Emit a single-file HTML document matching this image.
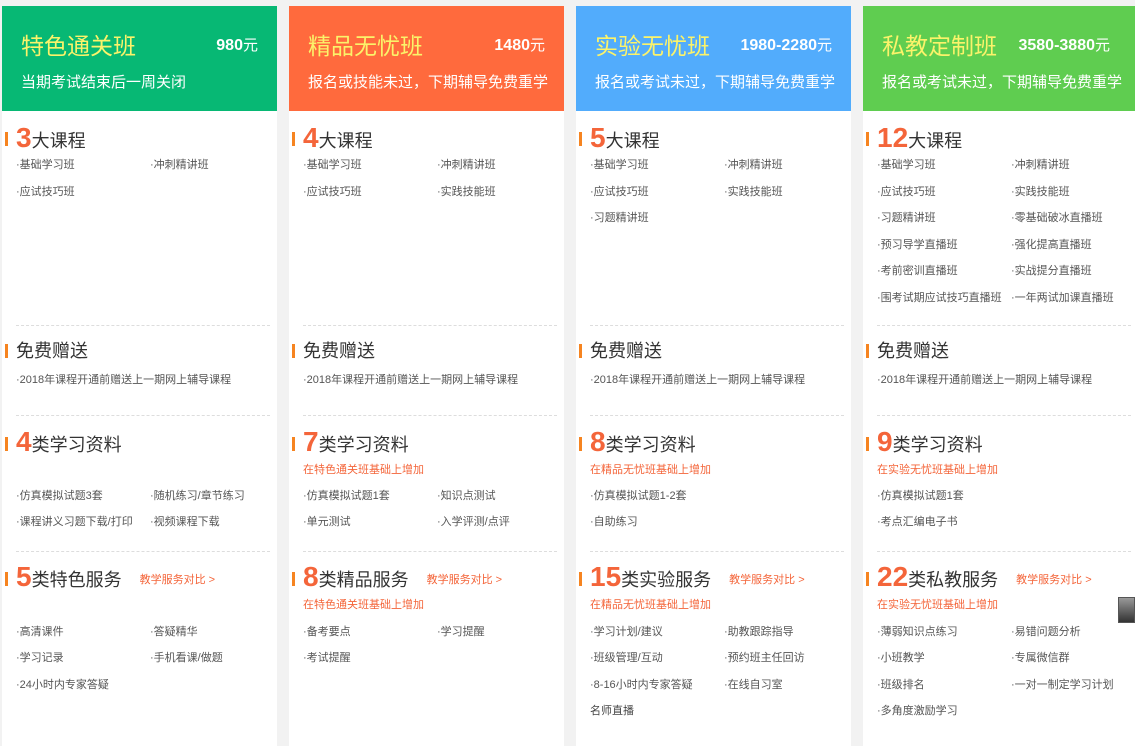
<!DOCTYPE html>
<html><head><meta charset="utf-8"><style>
*{margin:0;padding:0;box-sizing:border-box}
body{width:1135px;height:733px;background:#f2f2f2;font-family:"Liberation Sans","Noto Sans CJK SC",sans-serif;position:relative;overflow:hidden}
.col{position:absolute;top:6px;width:275px;height:740px;background:#fff}
.hd{position:absolute;left:0;top:0;width:100%;height:105px}
.t{position:absolute;left:19px;top:26px;font-size:23px;color:#fbf36a;line-height:28px}
.p{position:absolute;right:19px;top:30px;font-size:16px;font-weight:bold;color:#fff;line-height:20px}
.p span{font-weight:normal;font-size:15px}
.s{position:absolute;left:19px;top:67px;font-size:15px;color:#fff;line-height:20px;white-space:nowrap}
.a{position:absolute;white-space:nowrap;line-height:20px}
.h{font-size:18px;color:#333;left:14px;line-height:28px}
.h b{font-size:28px;color:#f4653a;font-weight:bold}
.bar{position:absolute;left:3px;width:3px;height:14px;background:#f68420}
.i{font-size:11px;color:#555}
.r{font-size:11px;color:#f4653a;left:14px}
.cmp{font-size:11px;color:#f4653a;margin-left:18px;vertical-align:3px}
.d{position:absolute;left:14px;width:254px;border-top:1px dashed #ddd}
</style></head><body>

<!-- col1 -->
<div class="col" style="left:2px">
<div class="hd" style="background:#07b874"><div class="t">特色通关班</div><div class="p">980<span>元</span></div><div class="s">当期考试结束后一周关闭</div></div>
<div class="bar" style="top:126px"></div><div class="a h" style="top:118px"><b>3</b>大课程</div>
<div class="a i" style="left:14px;top:149px">·基础学习班</div><div class="a i" style="left:148px;top:149px">·冲刺精讲班</div>
<div class="a i" style="left:14px;top:176px">·应试技巧班</div>
<div class="d" style="top:319px"></div>
<div class="bar" style="top:338px"></div><div class="a h" style="top:331px">免费赠送</div>
<div class="a i" style="left:14px;top:364px">·2018年课程开通前赠送上一期网上辅导课程</div>
<div class="d" style="top:409px"></div>
<div class="bar" style="top:431px"></div><div class="a h" style="top:422px"><b>4</b>类学习资料</div>
<div class="a i" style="left:14px;top:480px">·仿真模拟试题3套</div><div class="a i" style="left:148px;top:480px">·随机练习/章节练习</div>
<div class="a i" style="left:14px;top:506px">·课程讲义习题下载/打印</div><div class="a i" style="left:148px;top:506px">·视频课程下载</div>
<div class="d" style="top:545px"></div>
<div class="bar" style="top:566px"></div><div class="a h" style="top:557px"><b>5</b>类特色服务<span class="cmp">教学服务对比 &gt;</span></div>
<div class="a i" style="left:14px;top:616px">·高清课件</div><div class="a i" style="left:148px;top:616px">·答疑精华</div>
<div class="a i" style="left:14px;top:642px">·学习记录</div><div class="a i" style="left:148px;top:642px">·手机看课/做题</div>
<div class="a i" style="left:14px;top:669px">·24小时内专家答疑</div>
</div>

<!-- col2 -->
<div class="col" style="left:289px">
<div class="hd" style="background:#ff6a3d"><div class="t">精品无忧班</div><div class="p">1480<span>元</span></div><div class="s">报名或技能未过，下期辅导免费重学</div></div>
<div class="bar" style="top:126px"></div><div class="a h" style="top:118px"><b>4</b>大课程</div>
<div class="a i" style="left:14px;top:149px">·基础学习班</div><div class="a i" style="left:148px;top:149px">·冲刺精讲班</div>
<div class="a i" style="left:14px;top:176px">·应试技巧班</div><div class="a i" style="left:148px;top:176px">·实践技能班</div>
<div class="d" style="top:319px"></div>
<div class="bar" style="top:338px"></div><div class="a h" style="top:331px">免费赠送</div>
<div class="a i" style="left:14px;top:364px">·2018年课程开通前赠送上一期网上辅导课程</div>
<div class="d" style="top:409px"></div>
<div class="bar" style="top:431px"></div><div class="a h" style="top:422px"><b>7</b>类学习资料</div>
<div class="a r" style="top:454px">在特色通关班基础上增加</div>
<div class="a i" style="left:14px;top:480px">·仿真模拟试题1套</div><div class="a i" style="left:148px;top:480px">·知识点测试</div>
<div class="a i" style="left:14px;top:506px">·单元测试</div><div class="a i" style="left:148px;top:506px">·入学评测/点评</div>
<div class="d" style="top:545px"></div>
<div class="bar" style="top:566px"></div><div class="a h" style="top:557px"><b>8</b>类精品服务<span class="cmp">教学服务对比 &gt;</span></div>
<div class="a r" style="top:589px">在特色通关班基础上增加</div>
<div class="a i" style="left:14px;top:616px">·备考要点</div><div class="a i" style="left:148px;top:616px">·学习提醒</div>
<div class="a i" style="left:14px;top:642px">·考试提醒</div>
</div>

<!-- col3 -->
<div class="col" style="left:576px">
<div class="hd" style="background:#52acfc"><div class="t">实验无忧班</div><div class="p">1980-2280<span>元</span></div><div class="s">报名或考试未过，下期辅导免费重学</div></div>
<div class="bar" style="top:126px"></div><div class="a h" style="top:118px"><b>5</b>大课程</div>
<div class="a i" style="left:14px;top:149px">·基础学习班</div><div class="a i" style="left:148px;top:149px">·冲刺精讲班</div>
<div class="a i" style="left:14px;top:176px">·应试技巧班</div><div class="a i" style="left:148px;top:176px">·实践技能班</div>
<div class="a i" style="left:14px;top:202px">·习题精讲班</div>
<div class="d" style="top:319px"></div>
<div class="bar" style="top:338px"></div><div class="a h" style="top:331px">免费赠送</div>
<div class="a i" style="left:14px;top:364px">·2018年课程开通前赠送上一期网上辅导课程</div>
<div class="d" style="top:409px"></div>
<div class="bar" style="top:431px"></div><div class="a h" style="top:422px"><b>8</b>类学习资料</div>
<div class="a r" style="top:454px">在精品无忧班基础上增加</div>
<div class="a i" style="left:14px;top:480px">·仿真模拟试题1-2套</div>
<div class="a i" style="left:14px;top:506px">·自助练习</div>
<div class="d" style="top:545px"></div>
<div class="bar" style="top:566px"></div><div class="a h" style="top:557px"><b>15</b>类实验服务<span class="cmp">教学服务对比 &gt;</span></div>
<div class="a r" style="top:589px">在精品无忧班基础上增加</div>
<div class="a i" style="left:14px;top:616px">·学习计划/建议</div><div class="a i" style="left:148px;top:616px">·助教跟踪指导</div>
<div class="a i" style="left:14px;top:642px">·班级管理/互动</div><div class="a i" style="left:148px;top:642px">·预约班主任回访</div>
<div class="a i" style="left:14px;top:669px">·8-16小时内专家答疑</div><div class="a i" style="left:148px;top:669px">·在线自习室</div>
<div class="a i" style="left:14px;top:695px;color:#444">名师直播</div>
</div>

<!-- col4 -->
<div class="col" style="left:863px;width:272px">
<div class="hd" style="background:#5fcd50"><div class="t">私教定制班</div><div class="p" style="right:25px">3580-3880<span>元</span></div><div class="s">报名或考试未过，下期辅导免费重学</div></div>
<div class="bar" style="top:126px"></div><div class="a h" style="top:118px"><b>12</b>大课程</div>
<div class="a i" style="left:14px;top:149px">·基础学习班</div><div class="a i" style="left:148px;top:149px">·冲刺精讲班</div>
<div class="a i" style="left:14px;top:176px">·应试技巧班</div><div class="a i" style="left:148px;top:176px">·实践技能班</div>
<div class="a i" style="left:14px;top:202px">·习题精讲班</div><div class="a i" style="left:148px;top:202px">·零基础破冰直播班</div>
<div class="a i" style="left:14px;top:229px">·预习导学直播班</div><div class="a i" style="left:148px;top:229px">·强化提高直播班</div>
<div class="a i" style="left:14px;top:255px">·考前密训直播班</div><div class="a i" style="left:148px;top:255px">·实战提分直播班</div>
<div class="a i" style="left:14px;top:282px">·围考试期应试技巧直播班</div><div class="a i" style="left:148px;top:282px">·一年两试加课直播班</div>
<div class="d" style="top:319px"></div>
<div class="bar" style="top:338px"></div><div class="a h" style="top:331px">免费赠送</div>
<div class="a i" style="left:14px;top:364px">·2018年课程开通前赠送上一期网上辅导课程</div>
<div class="d" style="top:409px"></div>
<div class="bar" style="top:431px"></div><div class="a h" style="top:422px"><b>9</b>类学习资料</div>
<div class="a r" style="top:454px">在实验无忧班基础上增加</div>
<div class="a i" style="left:14px;top:480px">·仿真模拟试题1套</div>
<div class="a i" style="left:14px;top:506px">·考点汇编电子书</div>
<div class="d" style="top:545px"></div>
<div class="bar" style="top:566px"></div><div class="a h" style="top:557px"><b>22</b>类私教服务<span class="cmp">教学服务对比 &gt;</span></div>
<div class="a r" style="top:589px">在实验无忧班基础上增加</div>
<div class="a i" style="left:14px;top:616px">·薄弱知识点练习</div><div class="a i" style="left:148px;top:616px">·易错问题分析</div>
<div class="a i" style="left:14px;top:642px">·小班教学</div><div class="a i" style="left:148px;top:642px">·专属微信群</div>
<div class="a i" style="left:14px;top:669px">·班级排名</div><div class="a i" style="left:148px;top:669px">·一对一制定学习计划</div>
<div class="a i" style="left:14px;top:695px">·多角度激励学习</div>
</div>

<div style="position:absolute;left:1118px;top:597px;width:17px;height:26px;background:linear-gradient(#999,#333);border:1px solid #555"></div>
</body></html>
